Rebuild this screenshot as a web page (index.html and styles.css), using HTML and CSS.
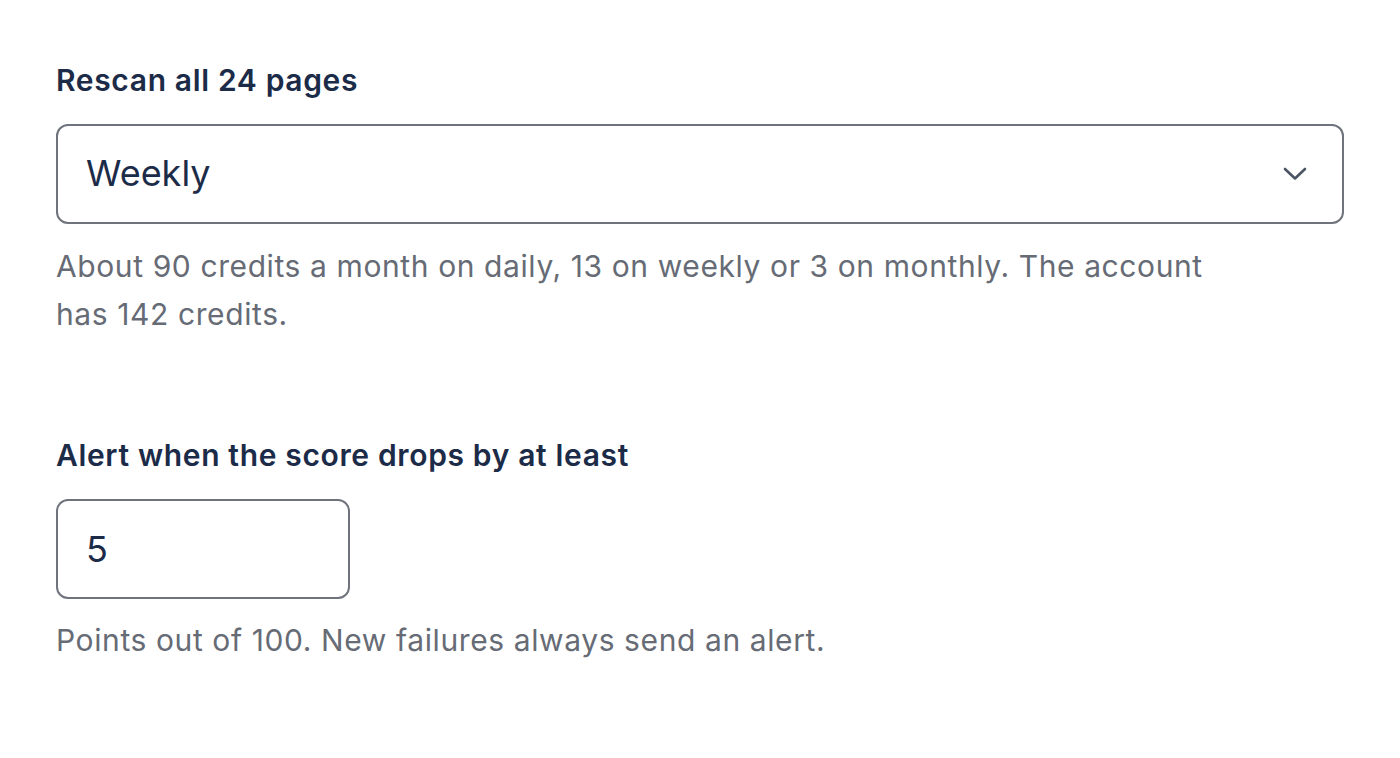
FILE: index.html
```html
<!DOCTYPE html>
<html lang="en">
<head>
<meta charset="utf-8">
<title>Monitoring settings</title>
<link rel="stylesheet" href="styles.css">
</head>
<body>
<form class="form">
  <div class="field">
    <label class="label" for="freq">Rescan all 24 pages</label>
    <div class="select">
      <span class="select-value" id="freq">Weekly</span>
      <svg class="chevron" width="26" height="16" viewBox="0 0 26 16"><path d="M3 3 L13 12.5 L23 3" fill="none" stroke="#4b5563" stroke-width="2.6" stroke-linecap="round" stroke-linejoin="round"/></svg>
    </div>
    <p class="help help-wide">About 90 credits a month on daily, 13 on weekly or 3 on monthly. The account has 142 credits.</p>
  </div>
  <div class="field field-second">
    <label class="label" for="drop">Alert when the score drops by at least</label>
    <div class="input" id="drop">5</div>
    <p class="help">Points out of 100. New failures always send an alert.</p>
  </div>
</form>
</body>
</html>
```
FILE: styles.css
```css
html, body {
  margin: 0;
  background: #ffffff;
}
body {
  font-family: "Inter", "Liberation Sans", sans-serif;
  color: #1c2b48;
}
.form {
  padding: 60px 56px 0 56px;
}
.field {
  display: flex;
  flex-direction: column;
  align-items: flex-start;
}
.field-second {
  margin-top: 97px;
}
.label {
  font-size: 30px;
  line-height: 40px;
  font-weight: 600;
  letter-spacing: 0.65px;
  color: #1c2b48;
  margin-bottom: 24px;
}
.select {
  box-sizing: border-box;
  width: 1288px;
  height: 100px;
  border: 2px solid #6e737c;
  border-radius: 12px;
  display: flex;
  align-items: center;
  justify-content: space-between;
  padding: 0 34px 0 28px;
}
.select-value {
  font-size: 36px;
  line-height: 44px;
  margin-top: -2px;
  color: #1c2b48;
}
.chevron {
  display: block;
}
.input {
  box-sizing: border-box;
  width: 294px;
  height: 100px;
  border: 2px solid #6e737c;
  border-radius: 12px;
  display: flex;
  align-items: center;
  padding: 0 28px;
  font-size: 36px;
  color: #1c2b48;
}
.help {
  margin: 18px 0 0 0;
  font-size: 30px;
  line-height: 48px;
  letter-spacing: 0.6px;
  color: #666b75;
}
.help-wide {
  max-width: 1180px;
}
.field-second .help {
  margin-top: 17px;
}
```
